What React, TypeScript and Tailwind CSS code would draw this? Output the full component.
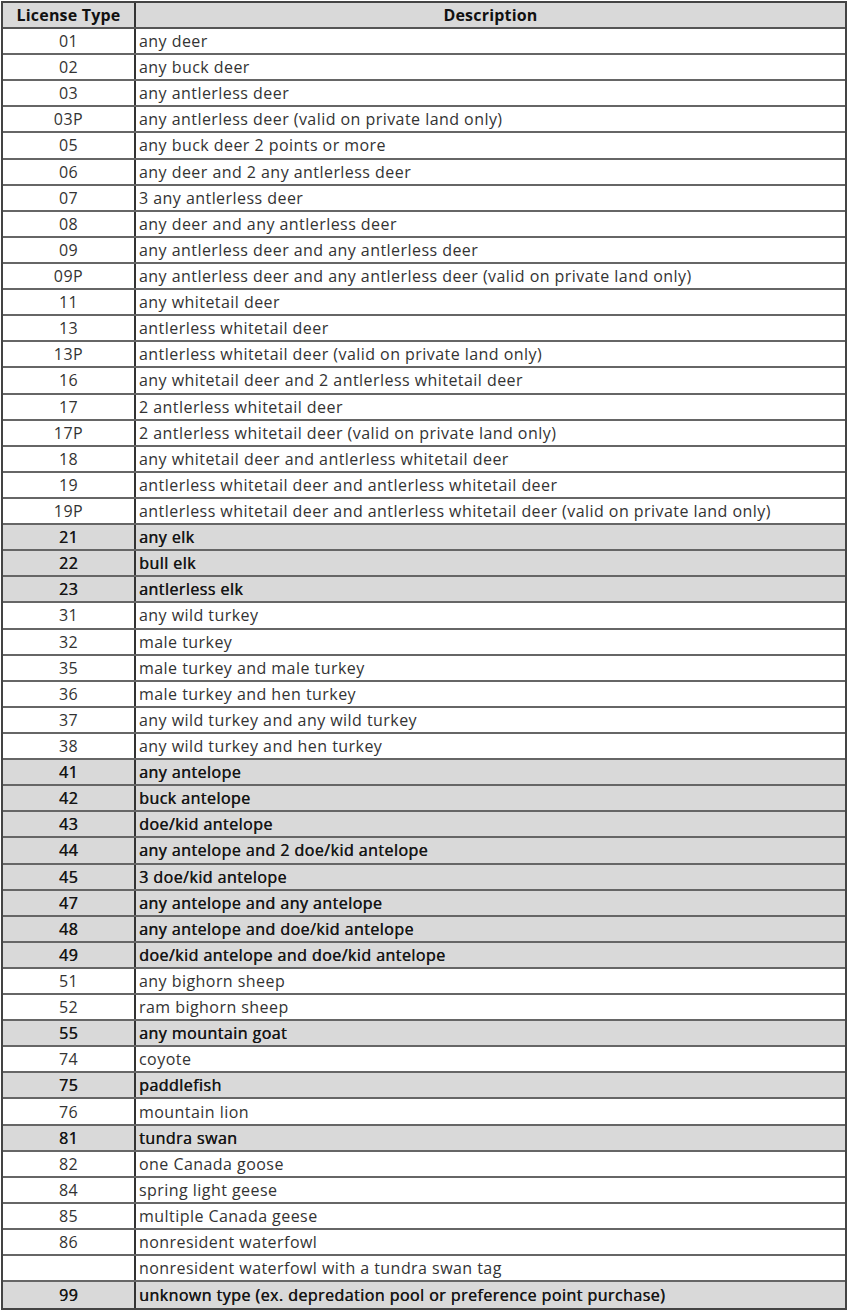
import React from "react";

const rows: [string, string, boolean][] = [
  ["01", "any deer", false],
  ["02", "any buck deer", false],
  ["03", "any antlerless deer", false],
  ["03P", "any antlerless deer (valid on private land only)", false],
  ["05", "any buck deer 2 points or more", false],
  ["06", "any deer and 2 any antlerless deer", false],
  ["07", "3 any antlerless deer", false],
  ["08", "any deer and any antlerless deer", false],
  ["09", "any antlerless deer and any antlerless deer", false],
  ["09P", "any antlerless deer and any antlerless deer (valid on private land only)", false],
  ["11", "any whitetail deer", false],
  ["13", "antlerless whitetail deer", false],
  ["13P", "antlerless whitetail deer (valid on private land only)", false],
  ["16", "any whitetail deer and 2 antlerless whitetail deer", false],
  ["17", "2 antlerless whitetail deer", false],
  ["17P", "2 antlerless whitetail deer (valid on private land only)", false],
  ["18", "any whitetail deer and antlerless whitetail deer", false],
  ["19", "antlerless whitetail deer and antlerless whitetail deer", false],
  ["19P", "antlerless whitetail deer and antlerless whitetail deer (valid on private land only)", false],
  ["21", "any elk", true],
  ["22", "bull elk", true],
  ["23", "antlerless elk", true],
  ["31", "any wild turkey", false],
  ["32", "male turkey", false],
  ["35", "male turkey and male turkey", false],
  ["36", "male turkey and hen turkey", false],
  ["37", "any wild turkey and any wild turkey", false],
  ["38", "any wild turkey and hen turkey", false],
  ["41", "any antelope", true],
  ["42", "buck antelope", true],
  ["43", "doe/kid antelope", true],
  ["44", "any antelope and 2 doe/kid antelope", true],
  ["45", "3 doe/kid antelope", true],
  ["47", "any antelope and any antelope", true],
  ["48", "any antelope and doe/kid antelope", true],
  ["49", "doe/kid antelope and doe/kid antelope", true],
  ["51", "any bighorn sheep", false],
  ["52", "ram bighorn sheep", false],
  ["55", "any mountain goat", true],
  ["74", "coyote", false],
  ["75", "paddlefish", true],
  ["76", "mountain lion", false],
  ["81", "tundra swan", true],
  ["82", "one Canada goose", false],
  ["84", "spring light geese", false],
  ["85", "multiple Canada geese", false],
  ["86", "nonresident waterfowl", false],
  ["", "nonresident waterfowl with a tundra swan tag", false],
  ["99", "unknown type (ex. depredation pool or preference point purchase)", true],
];

export default function App() {
  return (
    <div className="w-[850px] h-[1311px] bg-white pt-px pl-px" style={{ fontFamily: "'Open Sans', Lato, sans-serif" }}>
      <div className="w-[846px] border-2 border-[#444] flex flex-col">
        <div className="flex h-[26px] bg-[#d9d9d9] border-b-2 border-[#555] font-bold text-[16px] text-[#111] tracking-[0.2px]">
          <div className="w-[133px] border-r-2 border-[#333] flex items-center justify-center">License Type</div>
          <div className="flex-1 flex items-center justify-center">Description</div>
        </div>
        {rows.map(([code, desc, shaded], i) => (
          <div
            key={i}
            className={`flex h-[26.12px] text-[16px] tracking-[0.45px] ${shaded ? "bg-[#d9d9d9] text-[#151515] [text-shadow:0.4px_0_0_#151515]" : "bg-white text-[#333]"} ${i < rows.length - 1 ? "border-b-2 border-[#666]" : ""}`}
          >
            <div className="w-[133px] border-r-2 border-[#333] flex items-center justify-center">{code}</div>
            <div className="flex-1 flex items-center pl-[3px] whitespace-nowrap">{desc}</div>
          </div>
        ))}
      </div>
    </div>
  );
}
